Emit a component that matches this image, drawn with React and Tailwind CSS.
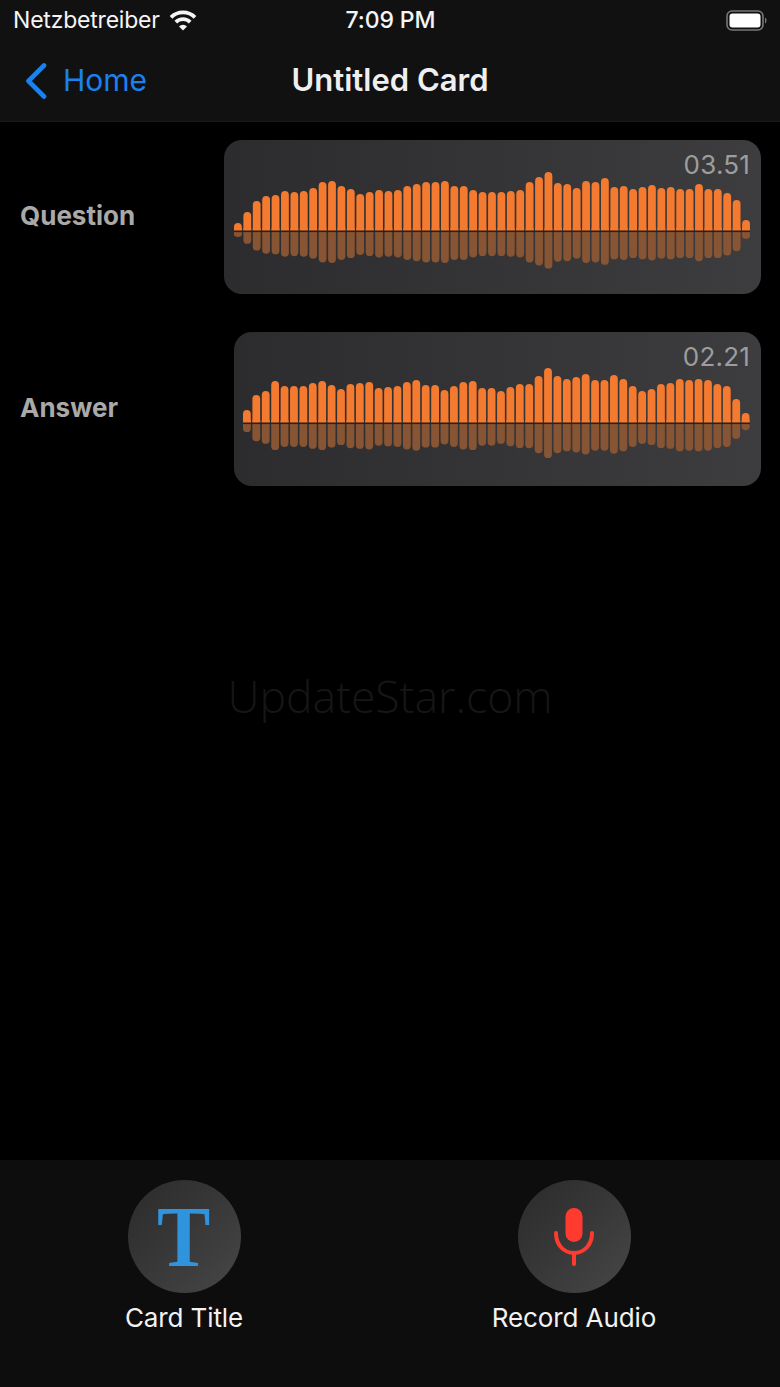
import React from 'react';

const FONT = { fontFamily: 'Inter, "Liberation Sans", sans-serif' };

// bar heights read off the screenshot
const questionBars = [8, 19, 30, 35, 36, 40, 39, 40, 43, 49, 50, 45, 42, 37, 39, 41, 40, 41, 45, 47, 49, 49, 50, 45, 45, 41, 39, 39, 39, 40, 41, 49, 54, 59, 48, 47, 43, 50, 49, 53, 44, 45, 42, 44, 46, 43, 44, 42, 42, 47, 42, 42, 38, 31, 11];
const answerBars = [13, 28, 32, 42, 37, 37, 37, 40, 42, 38, 34, 39, 40, 41, 35, 36, 37, 41, 43, 38, 38, 33, 37, 41, 42, 35, 35, 32, 36, 39, 39, 47, 55, 47, 44, 46, 49, 43, 43, 48, 44, 37, 32, 34, 39, 40, 44, 43, 44, 43, 39, 37, 24, 10];

const BASE = 61;
const STEP = 9.41;

const Waveform = ({ bars }) => (
  <svg width={bars.length * STEP - 1.6} height="110" className="block -mt-[8px]">
    {bars.map((h, i) => (
      <g key={i}>
        <rect x={i * STEP} y={BASE - h} width="7.8" height={h + 3} rx="3.9" fill="#f47a30" />
        <rect x={i * STEP} y={BASE - 3} width="7.8" height="4" fill="#f47a30" />
        <rect x={i * STEP} y={BASE + 1} width="7.8" height={h * 0.62} rx="3.9" fill="#875533" />
        <rect x={i * STEP} y={BASE + 1} width="7.8" height="3" fill="#875533" />
      </g>
    ))}
    <rect x="0" y={BASE - 0.5} width={bars.length * STEP} height="1.6" fill="#2a211c" />
  </svg>
);

const AudioRow = ({ label, time, bars, width, className }) => (
  <div className={`flex items-center justify-between pl-[20px] pr-[19px] ${className}`}>
    <span className="pb-[3px] text-[26px] font-bold text-[#a9a9a9]">{label}</span>
    <div className={`h-[154px] rounded-[18px] bg-gradient-to-r from-[#2c2c2e] to-[#3d3d3f] pt-[12px] pr-[11px] flex flex-col items-end ${width}`}>
      <span className="text-[26px] leading-[26px] text-[#9d9d9f] tracking-[0.2px]">{time}</span>
      <Waveform bars={bars} />
    </div>
  </div>
);

const Wifi = () => (
  <svg width="28" height="21" viewBox="0 0 28 21" fill="none" stroke="#f5f5f5" strokeWidth="3.8">
    <path d="M2 7.4 A17 17 0 0 1 26 7.4" />
    <path d="M6.8 12.2 A10.2 10.2 0 0 1 21.2 12.2" />
    <path d="M14 20.5 L10 16.4 A5.6 5.6 0 0 1 18 16.4 Z" fill="#f5f5f5" stroke="none" />
  </svg>
);

const Battery = () => (
  <svg width="42" height="21" viewBox="0 0 42 21">
    <rect x="1" y="1" width="36" height="19" rx="5" fill="none" stroke="#77777a" strokeWidth="1.6" />
    <rect x="3.5" y="3.5" width="31" height="14" rx="3" fill="#ffffff" />
    <path d="M39 7.5 C41 8.2 41 12.8 39 13.5 Z" fill="#77777a" />
  </svg>
);

const ActionButton = ({ label, children }) => (
  <div className="flex flex-col items-center">
    <div className="w-[113px] h-[113px] rounded-full bg-gradient-to-br from-[#2b2b2b] via-[#383838] to-[#474747] flex items-center justify-center">
      {children}
    </div>
    <span className="mt-[9px] text-[26px] leading-[32px] text-[#f2f2f2] tracking-[-0.1px]">{label}</span>
  </div>
);

export default function App() {
  return (
    <div className="w-[780px] h-[1387px] bg-black flex flex-col overflow-hidden" style={FONT}>
      <header className="h-[122px] bg-[#111112] border-b border-[#1b1b1c] flex flex-col shrink-0">
        <div className="h-[40px] pl-[13px] pr-[12px] grid grid-cols-3 items-center text-[23px] text-[#f5f5f5]">
          <div className="flex items-center gap-[9px]">
            <span className="tracking-[-0.2px]">Netzbetreiber</span>
            <Wifi />
          </div>
          <span className="text-center font-medium tracking-[-0.1px]">7:09 PM</span>
          <div className="flex justify-end">
            <Battery />
          </div>
        </div>
        <div className="relative h-[81px] flex items-center justify-center">
          <div className="absolute left-[25px] flex items-center gap-[16px]">
            <svg width="22" height="36" viewBox="0 0 22 36" fill="none" stroke="#1a82f0" strokeWidth="4.6" strokeLinecap="round" strokeLinejoin="round">
              <path d="M19 2.5 L3.5 18 L19 33.5" />
            </svg>
            <span className="text-[30px] text-[#1a82f0]">Home</span>
          </div>
          <h1 className="text-[31px] font-semibold text-[#efefef]">Untitled Card</h1>
        </div>
      </header>

      <main className="flex-1 flex flex-col">
        <AudioRow label="Question" time="03.51" bars={questionBars} width="w-[537px]" className="mt-[18px]" />
        <AudioRow label="Answer" time="02.21" bars={answerBars} width="w-[527px]" className="mt-[38px]" />
        <p className="mt-[180px] text-center text-[44.5px] leading-[60px] font-light text-[#161616]" style={{ fontFamily: '"Open Sans", sans-serif' }}>UpdateStar.com</p>
      </main>

      <footer className="h-[227px] bg-[#0d0d0e] pt-[20px] grid grid-cols-[368px_412px] items-start shrink-0">
        <ActionButton label="Card Title">
          <span className="text-[86px] leading-none font-bold text-[#2f93de] scale-x-[0.93]" style={{ fontFamily: '"Liberation Serif", serif' }}>T</span>
        </ActionButton>
        <ActionButton label="Record Audio">
          <svg width="42" height="60" viewBox="0 0 42 60" fill="none">
            <rect x="12.5" y="1" width="17" height="34" rx="8.5" fill="#ff3b30" />
            <path d="M3 26 C3 38 11 46 21 46 C31 46 39 38 39 26" stroke="#ff3b30" strokeWidth="4" strokeLinecap="round" />
            <path d="M21 46 V57" stroke="#ff3b30" strokeWidth="4" strokeLinecap="round" />
          </svg>
        </ActionButton>
      </footer>
    </div>
  );
}
